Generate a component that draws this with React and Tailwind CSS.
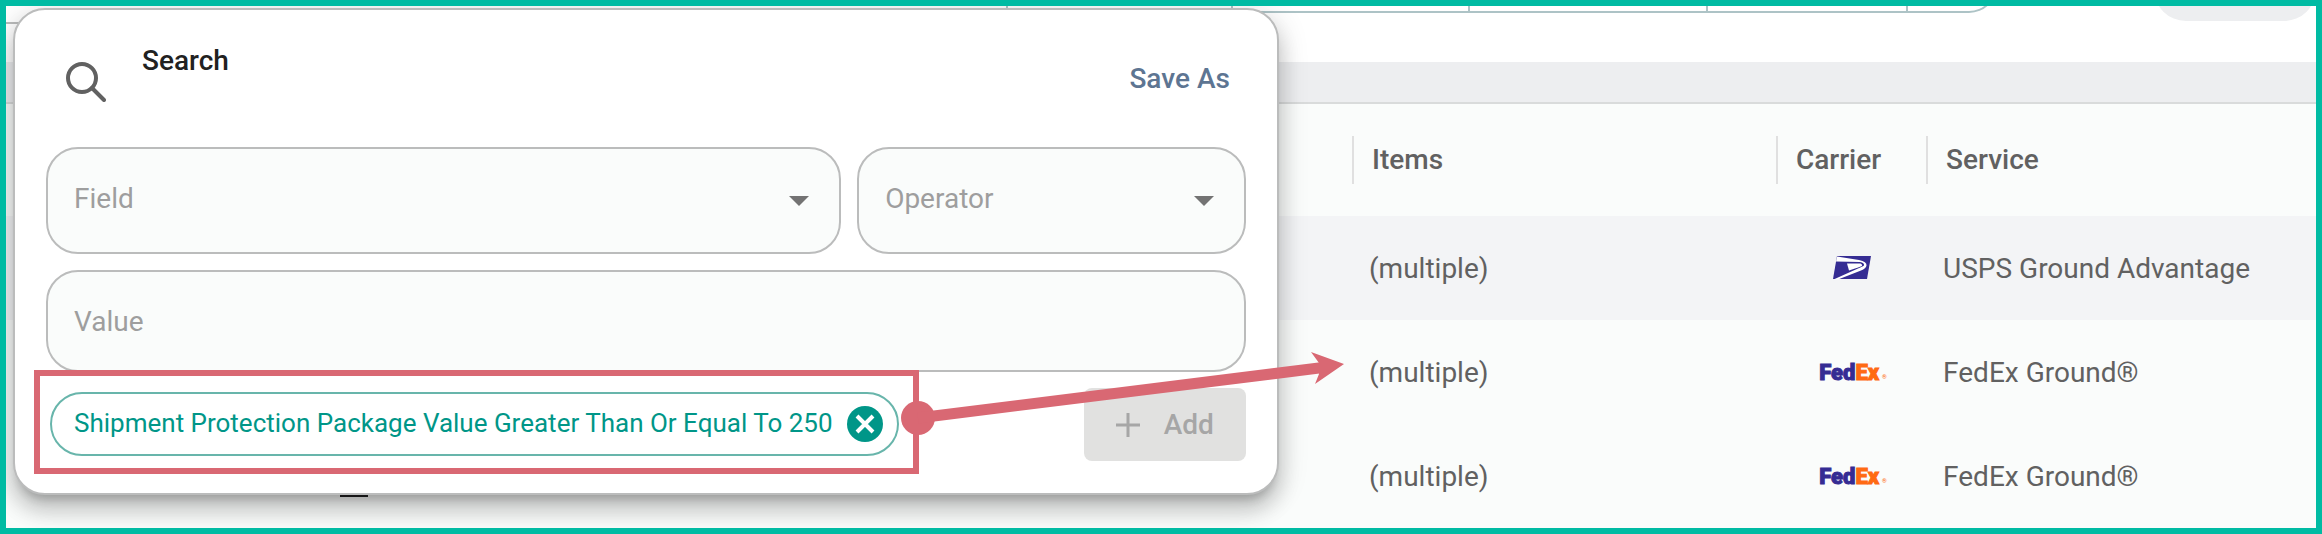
import React, { useState } from "react";

const shipments = [
  { id: 1, items: "(multiple)", carrier: "usps", service: "USPS Ground Advantage" },
  { id: 2, items: "(multiple)", carrier: "fedex", service: "FedEx Ground®" },
  { id: 3, items: "(multiple)", carrier: "fedex", service: "FedEx Ground®" },
];

const fieldOptions = ["Shipment Protection Package Value", "Items", "Carrier", "Service"];
const operatorOptions = ["Equal To", "Greater Than Or Equal To", "Less Than Or Equal To"];

function UspsLogo() {
  return (
    <svg viewBox="0 0 38 24" className="w-[38px] h-6" role="img" aria-label="USPS">
      <path d="M4 0H38L34 23H0Z" fill="#352c93" />
      <path d="M4 0.500L26 4Q34 5.500 33.500 9.500Q33 12.500 28 14.500L5 23.500H0.500L25 12.500Q30 10.500 31 9.500Q31.500 6.500 27 6L3 5.500Z" fill="#fff" />
      <path d="M14 7.500H27.500Q29.500 8 29 10L25 11.500L16 14.500Z" fill="#fff" />
    </svg>
  );
}

function FedexLogo() {
  return (
    <span className="flex items-end pl-[2px] pt-[2px] leading-6 text-[22px] font-black">
      <span className="text-[#352c93] [-webkit-text-stroke:1px_#352c93]">Fed</span>
      <span className="text-[#ff6a13] [-webkit-text-stroke:1px_#ff6a13]">Ex</span>
      <span className="ml-[3px] text-[6px] leading-4 text-[#ff6a13]">®</span>
    </span>
  );
}

function Dropdown({ label, options, className }) {
  const [value, setValue] = useState("");
  return (
    <div className={`relative ${className}`}>
      <select
        aria-label={label}
        value={value}
        onChange={(e) => setValue(e.target.value)}
        className="appearance-none w-full h-[107px] pl-[26px] pr-16 pb-1 rounded-[32px] border-2 border-[#bbbcbc] bg-[#fafcfb] text-[28px] text-[#9e9e9e]"
      >
        <option value="">{label}</option>
        {options.map((opt) => (
          <option key={opt} value={opt}>
            {opt}
          </option>
        ))}
      </select>
      <svg viewBox="0 0 20 10" className="absolute right-8 top-[49px] w-5 h-[10px] pointer-events-none">
        <path d="M0 0H20L10 10Z" fill="#737373" />
      </svg>
    </div>
  );
}

// red box round the chip, with the arrow that leads to the table
function Callout() {
  return (
    <div className="absolute -left-4 -right-5 -top-[22px] -bottom-[18px] border-[6px] border-[#d96873] pointer-events-none">
      <svg viewBox="0 0 444 90" className="absolute left-full top-0 -ml-3 -mt-[30px] w-[444px] h-[90px]">
        <circle cx="17" cy="72" r="17" fill="#d96873" />
        <path d="M17 72L422 21.500" stroke="#d96873" strokeWidth="11" />
        <path d="M443 18L410 6L418 17V28L414 38Z" fill="#d96873" />
      </svg>
    </div>
  );
}

function SearchPanel() {
  const [query, setQuery] = useState("");
  const [chips, setChips] = useState(["Shipment Protection Package Value Greater Than Or Equal To 250"]);

  return (
    <div className="absolute left-[7px] top-[2px] w-[54.8%] px-[31px] pb-8 rounded-[32px] border-2 border-[#bbbcbc] bg-white shadow-[0_10px_10px_-6px_rgba(0,0,0,0.2),0_16px_20px_2px_rgba(0,0,0,0.14),0_6px_28px_4px_rgba(0,0,0,0.12)]">
      <div className="flex items-start h-[137px] pl-5">
        <svg viewBox="0 0 40 40" className="w-10 h-10 mt-[52px]" fill="none" stroke="#616161" strokeWidth="4">
          <circle cx="16" cy="16" r="14" />
          <path d="M26 26L38 38" strokeLinecap="round" />
        </svg>
        <h2 className="ml-9 mt-[33px] text-[28px] leading-9 font-medium text-[#212121]">Search</h2>
        <button className="ml-auto mr-4 mt-[51px] text-[28px] leading-9 font-medium text-[#5d7592]">Save As</button>
      </div>

      <div className="flex gap-4">
        <Dropdown label="Field" options={fieldOptions} className="flex-1" />
        <Dropdown label="Operator" options={operatorOptions} className="w-[32.4%]" />
      </div>

      <input
        type="text"
        aria-label="Value"
        placeholder="Value"
        value={query}
        onChange={(e) => setQuery(e.target.value)}
        className="block w-full h-[102px] mt-4 px-[26px] rounded-[32px] border-2 border-[#bbbcbc] bg-[#fafcfb] text-[28px] text-[#616161] placeholder:text-[#9e9e9e]"
      />

      <div className="flex items-start justify-between mt-4 pl-1">
        {chips.map((chip) => (
          <div key={chip} className="relative z-10 mt-1">
            <div className="flex items-center h-16 pl-[22px] pr-[14px] rounded-full border-2 border-[#68b5ab] text-[26px] text-[#009688] whitespace-nowrap">
              <span className="pb-[2px]">{chip}</span>
              <button aria-label="Remove filter" className="ml-[14px]" onClick={() => setChips(chips.filter((c) => c !== chip))}>
                <svg viewBox="0 0 36 36" className="block w-9 h-9">
                  <circle cx="18" cy="18" r="18" fill="#009688" />
                  <path d="M10 10L26 26M26 10L10 26" stroke="#fff" strokeWidth="4" />
                </svg>
              </button>
            </div>
            <Callout />
          </div>
        ))}
        <button disabled className="flex items-center gap-6 h-[73px] px-8 ml-auto rounded-lg bg-[#e1e1e0] text-[28px] font-medium text-[#a6a6a6]">
          <svg viewBox="0 0 24 24" className="w-6 h-6" stroke="#a6a6a6" strokeWidth="3">
            <path d="M0 12H24M12 0V24" />
          </svg>
          Add
        </button>
      </div>
    </div>
  );
}

export default function App() {
  return (
    <div className="relative min-h-screen overflow-hidden border-[6px] border-[#00bba3] bg-[#fafcfb] font-['Roboto',sans-serif]">
      {/* Toolbar, scrolled almost out of view */}
      <div className="flex items-start justify-between h-14 bg-white">
        <div className="flex w-[86.2%] h-[7px]">
          <div className="w-[2%] h-[18px] border-b-2 border-[#bbbcbc]" />
          <div className="w-[48.2%] border-b-2 border-[#adc3c6]" />
          <div className="w-[11.3%] border-l-2 border-b-2 border-[#adc3c6]" />
          <div className="w-[11.9%] border-l-2 border-b-2 border-[#adc3c6]" />
          <div className="w-[12%] border-l-2 border-b-2 border-[#adc3c6]" />
          <div className="w-[10%] border-l-2 border-b-2 border-[#adc3c6]" />
          <div className="flex-1 overflow-hidden flex items-end border-l-2 border-[#adc3c6]">
            <div className="w-full h-12 shrink-0 rounded-br-[28px] border-r-2 border-b-2 border-[#adc3c6]" />
          </div>
        </div>
        <div className="flex items-end w-[7%] h-[15px] overflow-hidden">
          <div className="w-full h-16 shrink-0 rounded-[32px] bg-[#edeef0]" />
        </div>
      </div>
      <div className="h-[42px] bg-[#edeef0] border-b-2 border-[#d9dbdb]" />

      <table className="w-full table-fixed text-left text-[28px] text-[#616161]">
        <colgroup>
          <col className="w-[58.27%]" />
          <col className="w-[18.35%]" />
          <col className="w-[6.5%]" />
          <col />
        </colgroup>
        <thead>
          <tr className="h-28">
            <td />
            {["Items", "Carrier", "Service"].map((title) => (
              <th key={title} scope="col" className="p-0 font-medium">
                <div className="flex items-center h-12 pl-[18px] border-l-2 border-[#e0e0e0]">{title}</div>
              </th>
            ))}
          </tr>
        </thead>
        <tbody>
          {shipments.map((row) => (
            <tr key={row.id} className="h-26 first:bg-[#f3f4f6]">
              <td className="p-0">
                <div className="w-7 h-[42px] ml-[334px] border-b-2 border-[#212121]" />
              </td>
              <td className="p-0 pl-[17px] pt-[2px]">{row.items}</td>
              <td className="p-0">
                <div className="flex justify-center pl-[2px]">{row.carrier === "usps" ? <UspsLogo /> : <FedexLogo />}</div>
              </td>
              <td className="p-0 pl-[17px] pt-[2px] whitespace-nowrap">{row.service}</td>
            </tr>
          ))}
        </tbody>
      </table>

      <SearchPanel />
    </div>
  );
}
